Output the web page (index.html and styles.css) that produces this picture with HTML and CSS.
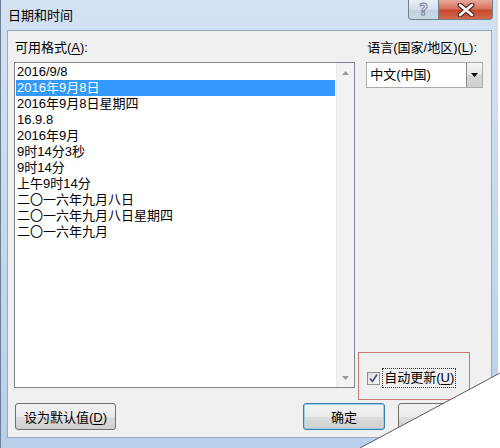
FILE: index.html
```html
<!DOCTYPE html>
<html lang="zh-CN">
<head>
    <meta charset="UTF-8">
    <title>日期和时间</title>
    <link rel="stylesheet" href="styles.css">
</head>
<body>
    <div class="window">
        <div class="titlebar">
            <span class="title">日期和时间</span>
            <div class="caption-buttons">
                <div class="cap-btn help">?</div>
                <div class="cap-btn close">
                    <svg width="20" height="14" viewBox="0 0 20 14">
                        <path d="M4 2 L16 12 M16 2 L4 12" stroke="#5a2a22" stroke-width="5" stroke-linecap="round"/>
                        <path d="M4 2 L16 12 M16 2 L4 12" stroke="#fff" stroke-width="2.6" stroke-linecap="round"/>
                    </svg>
                </div>
            </div>
        </div>

        <div class="client">
            <div class="main">
                <div class="left-col">
                    <div class="label">可用格式(<u>A</u>):</div>
                    <div class="listbox">
                        <ul class="items">
                            <li>2016/9/8</li>
                            <li class="selected">2016年9月8日</li>
                            <li>2016年9月8日星期四</li>
                            <li>16.9.8</li>
                            <li>2016年9月</li>
                            <li>9时14分3秒</li>
                            <li>9时14分</li>
                            <li>上午9时14分</li>
                            <li>二〇一六年九月八日</li>
                            <li>二〇一六年九月八日星期四</li>
                            <li>二〇一六年九月</li>
                        </ul>
                        <div class="scrollbar">
                            <svg width="7" height="4" viewBox="0 0 7 4"><path d="M0 4 L3.5 0 L7 4 Z" fill="#9a9a9a"/></svg>
                            <svg width="7" height="4" viewBox="0 0 7 4"><path d="M0 0 L3.5 4 L7 0 Z" fill="#9a9a9a"/></svg>
                        </div>
                    </div>
                </div>

                <div class="right-col">
                    <div class="label">语言(国家/地区)(<u>L</u>):</div>
                    <div class="combo">
                        <span class="combo-text">中文(中国)</span>
                        <span class="drop">
                            <svg width="7" height="4" viewBox="0 0 7 4"><path d="M0 0 L3.5 4 L7 0 Z" fill="#000"/></svg>
                        </span>
                    </div>

                    <div class="auto-update">
                        <span class="checkbox">
                            <svg width="11" height="11" viewBox="0 0 11 11"><path d="M2 5.5 L4.5 8.5 L9 1.5" fill="none" stroke="#3b4f73" stroke-width="1.6"/></svg>
                        </span>
                        <span class="cb-label">自动更新(<u>U</u>)</span>
                        <div class="mark"></div>
                    </div>
                </div>
            </div>

            <div class="buttons">
                <button class="btn wide">设为默认值(<u>D</u>)</button>
                <div class="spacer"></div>
                <button class="btn default">确定</button>
                <button class="btn">取消</button>
            </div>
        </div>

        <div class="frame-bottom"></div>

        <!-- page curl over the corner -->
        <svg class="curl" width="500" height="448" viewBox="0 0 500 448">
            <polygon points="360,448 500,448 500,373" fill="#fff"/>
            <line x1="360" y1="448" x2="500" y2="373" stroke="#5c5c5c" stroke-width="1"/>
        </svg>
    </div>
</body>
</html>
```

FILE: styles.css
```css
body {
    margin: 0;
    background-color: #fff;
    font-family: "Liberation Sans", "Noto Sans CJK SC", sans-serif;
    font-size: 13px;
    color: #000;
}

.window {
    position: relative;
    width: 498px;
    height: 448px;
    background: linear-gradient(to bottom, #d3e2f2 0%, #c2d7ed 60%, #b9d0ea 100%);
    border-left: 1px solid #6b7f96;
    box-sizing: border-box;
    display: flex;
    flex-direction: column;
}

.titlebar {
    height: 30px;
    display: flex;
    align-items: flex-start;
    justify-content: space-between;
}

.title {
    margin-left: 7px;
    line-height: 32px;
}

.caption-buttons {
    display: flex;
    margin-right: 5px;
}

.cap-btn {
    height: 20px;
    box-sizing: border-box;
    border: 1px solid #6f7f90;
    border-top: none;
    display: flex;
    align-items: center;
    justify-content: center;
}

.help {
    width: 31px;
    border-radius: 0 0 0 4px;
    background: linear-gradient(to bottom, #e9eff6 0%, #d3deea 50%, #c2d0df 51%, #cad8e6 100%);
    color: #e8eef5;
    font-family: "DejaVu Sans", sans-serif;
    font-weight: bold;
    font-size: 15px;
    -webkit-text-stroke: 1px #7b8796;
}

.close {
    width: 54px;
    border-left: none;
    border-radius: 0 0 4px 0;
    background: linear-gradient(to bottom, #e7a899 0%, #d8755f 45%, #c54a2e 55%, #d36a4c 100%);
}

.client {
    flex: 1;
    margin: 0 6px 0 6px;
    background-color: #f0f0f0;
    border: 1px solid #96aac1;
    display: flex;
    flex-direction: column;
    padding: 8px 8px 7px 6px;
}

.main {
    display: flex;
    height: 349px;
}

.left-col {
    width: 342px;
    display: flex;
    flex-direction: column;
}

.label {
    line-height: 18px;
    height: 18px;
    margin-bottom: 5px;
    padding-left: 1px;
}

u {
    text-decoration-thickness: 1px;
    text-underline-offset: 2px;
}

.listbox {
    flex: 1;
    border: 1px solid #828790;
    background-color: #fff;
    display: flex;
}

.items {
    flex: 1;
    list-style: none;
    margin: 0;
    padding: 1px 1px 0 1px;
}

.items li {
    height: 16px;
    line-height: 16px;
    padding-left: 1px;
    white-space: nowrap;
}

.items li.selected {
    background-color: #3399ff;
    color: #fff;
}

.scrollbar {
    width: 17px;
    background-color: #f3f3f3;
    border-left: 1px solid #ececec;
    display: flex;
    flex-direction: column;
    justify-content: space-between;
    align-items: center;
    padding: 8px 0 7px 0;
}

.right-col {
    width: 117px;
    margin-left: 11px;
    display: flex;
    flex-direction: column;
}

.combo {
    height: 26px;
    box-sizing: border-box;
    border: 1px solid #acacac;
    background-color: #fff;
    display: flex;
    align-items: stretch;
}

.combo-text {
    flex: 1;
    padding-left: 3px;
    line-height: 24px;
}

.drop {
    width: 15px;
    border-left: 1px solid #8b8b8b;
    background: linear-gradient(to bottom, #f4f4f4 0%, #e6e6e6 50%, #d6d6d6 51%, #cfcfcf 100%);
    display: flex;
    align-items: center;
    justify-content: center;
}

.auto-update {
    position: relative;
    margin-top: auto;
    height: 20px;
    display: flex;
    align-items: center;
    padding-left: 1px;
}

.checkbox {
    width: 13px;
    height: 13px;
    box-sizing: border-box;
    border: 1px solid #8f8f8f;
    background: linear-gradient(to bottom right, #dcdcdc, #fbfbfb);
    display: flex;
    align-items: center;
    justify-content: center;
}

.cb-label {
    margin-left: 2px;
    border: 1px dotted #333;
    padding: 0 1px;
    line-height: 18px;
}

/* red annotation box drawn around the checkbox */
.mark {
    position: absolute;
    left: -8px;
    top: -16px;
    width: 110px;
    height: 46px;
    border: 1px solid #c97676;
}

.buttons {
    display: flex;
    margin-top: 15px;
    padding-left: 1px;
    padding-right: 3px;
}

.spacer {
    flex: 1;
}

.btn {
    height: 27px;
    width: 82px;
    font-family: inherit;
    font-size: 13px;
    color: #000;
    border: 1px solid #707070;
    border-radius: 3px;
    background: linear-gradient(to bottom, #f2f2f2 0%, #ebebeb 50%, #dddddd 51%, #cfcfcf 100%);
    padding: 0;
    margin-left: 13px;
}

.btn.wide {
    width: 101px;
    margin-left: 0;
}

.btn.default {
    border-color: #3c7fb1;
    box-shadow: inset 0 0 0 1px #9ccfe0;
    margin-left: 0;
}

.frame-bottom {
    height: 10px;
}

.curl {
    position: absolute;
    left: -1px;
    top: 0;
    pointer-events: none;
}
```
